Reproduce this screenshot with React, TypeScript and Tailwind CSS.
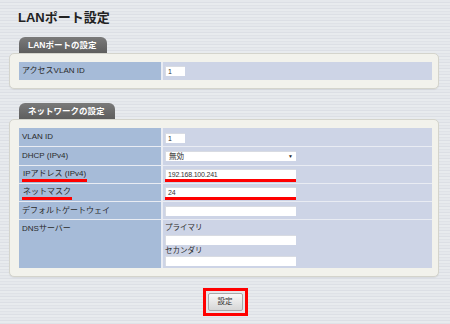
import React from "react";

const font = "font-['Liberation_Sans','Noto_Sans_CJK_JP',sans-serif]";

function Tab({ children, w }: { children: React.ReactNode; w: string }) {
  return (
    <div
      className={`ml-[19px] ${w} h-[16px] rounded-t-[6px] bg-gradient-to-b from-[#7a7a7a] to-[#5e5e5e] text-white font-bold text-[8.5px] leading-[16px] pl-[9px]`}
    >
      {children}
    </div>
  );
}

function Panel({ children }: { children: React.ReactNode }) {
  return (
    <div className="ml-[9px] w-[430px] rounded-[5px] border border-[#d4d4cc] bg-[#f2f2ec] pt-[8px] pl-[9px] pr-[6px] pb-[8px] shadow-[0_1px_1px_rgba(0,0,0,0.06)]">
      {children}
    </div>
  );
}

function Label({ children, h, top }: { children: React.ReactNode; h: string; top?: boolean }) {
  return (
    <div className={`${h} bg-[#a6bbd8] pl-[3px] text-[8px] text-[#2a2a2a] flex ${top ? "items-start pt-[3px]" : "items-center"}`}>
      {children}
    </div>
  );
}

function Value({ children, h, top }: { children: React.ReactNode; h: string; top?: boolean }) {
  return (
    <div className={`${h} bg-[#cdd4e6] pl-[2px] text-[7.5px] text-[#2a2a2a] flex ${top ? "flex-col items-start" : "items-center"}`}>
      {children}
    </div>
  );
}

function Input({ w, value, red }: { w: string; value?: string; red?: boolean }) {
  return (
    <div className="flex flex-col">
      <div className={`${w} h-[10px] bg-white border-t border-l border-[#d8dbe2] text-[7px] tracking-[-0.2px] leading-[9px] text-[#333] pl-[2px]`}>
        {value}
      </div>
      {red && <div className={`${w} h-[3px] bg-[#ff0000]`} />}
    </div>
  );
}

function RedLabel({ children }: { children: React.ReactNode }) {
  return (
    <span className="inline-block border-b-[3px] border-[#ff0000] leading-[10px] pl-[1px] pr-[1px] mt-[1px]">
      {children}
    </span>
  );
}

export default function App() {
  return (
    <div
      className={`${font} w-[450px] h-[324px] overflow-hidden pt-[10px] text-[#333] bg-[repeating-linear-gradient(180deg,#e5e8ec_0px,#e5e8ec_2px,#dcdfe5_2px,#dcdfe5_3px,#e8ebee_3px,#e8ebee_5px,#dfe2e7_5px,#dfe2e7_6px)]`}
    >
      <div className="ml-[18px] h-[16px] leading-[16px] text-[13px] font-bold text-[#222]">
        LANポート設定
      </div>

      <div className="mt-[11px]">
        <Tab w="w-[88px]">LANポートの設定</Tab>
        <Panel>
          <div className="grid grid-cols-[142px_1fr] gap-x-[2px] bg-[#e9ecf3]">
            <Label h="h-[18px]">アクセスVLAN ID</Label>
            <Value h="h-[18px]">
              <Input w="w-[20px]" value="1" />
            </Value>
          </div>
        </Panel>
      </div>

      <div className="mt-[14px]">
        <Tab w="w-[96px]">ネットワークの設定</Tab>
        <Panel>
          <div className="grid grid-cols-[142px_1fr] gap-x-[2px] gap-y-[1px] bg-[#e9ecf3]">
            <Label h="h-[18px]">VLAN ID</Label>
            <Value h="h-[18px]">
              <div className="mt-[1px]">
                <Input w="w-[20px]" value="1" />
              </div>
            </Value>

            <Label h="h-[18px]">DHCP (IPv4)</Label>
            <Value h="h-[18px]">
              <div className="w-[131px] h-[10px] bg-white border-t border-l border-[#d8dbe2] text-[7.5px] leading-[9px] pl-[3px] flex justify-between pr-[3px]">
                <span>無効</span>
                <span className="text-[5px] leading-[9px]">▼</span>
              </div>
            </Value>

            <Label h="h-[17px]">
              <RedLabel>IPアドレス (IPv4)</RedLabel>
            </Label>
            <Value h="h-[17px]">
              <div className="mt-[2px]">
                <Input w="w-[131px]" value="192.168.100.241" red />
              </div>
            </Value>

            <Label h="h-[17px]">
              <RedLabel>ネットマスク</RedLabel>
            </Label>
            <Value h="h-[17px]">
              <div className="mt-[2px]">
                <Input w="w-[131px]" value="24" red />
              </div>
            </Value>

            <Label h="h-[17px]">デフォルトゲートウェイ</Label>
            <Value h="h-[17px]">
              <div className="mt-[1px]">
                <Input w="w-[131px]" />
              </div>
            </Value>

            <Label h="h-[48px]" top>
              DNSサーバー
            </Label>
            <Value h="h-[48px]" top>
              <div className="leading-[10px] mt-[3px] h-[12px]">プライマリ</div>
              <Input w="w-[131px]" />
              <div className="leading-[10px] mt-0 h-[11px] pt-[1px]">セカンダリ</div>
              <Input w="w-[131px]" />
            </Value>
          </div>
        </Panel>
      </div>

      <div className="mt-[11px] flex justify-center">
        <div className="border-[3px] border-[#ff0000] p-[2px] bg-[#e4e6ea]">
          <div className="w-[35px] h-[18px] border border-[#a8a8a8] rounded-[2px] bg-gradient-to-b from-[#f8f8f8] to-[#d6d6d6] text-[7.5px] leading-[16px] text-center text-[#333]">
            設定
          </div>
        </div>
      </div>
    </div>
  );
}
